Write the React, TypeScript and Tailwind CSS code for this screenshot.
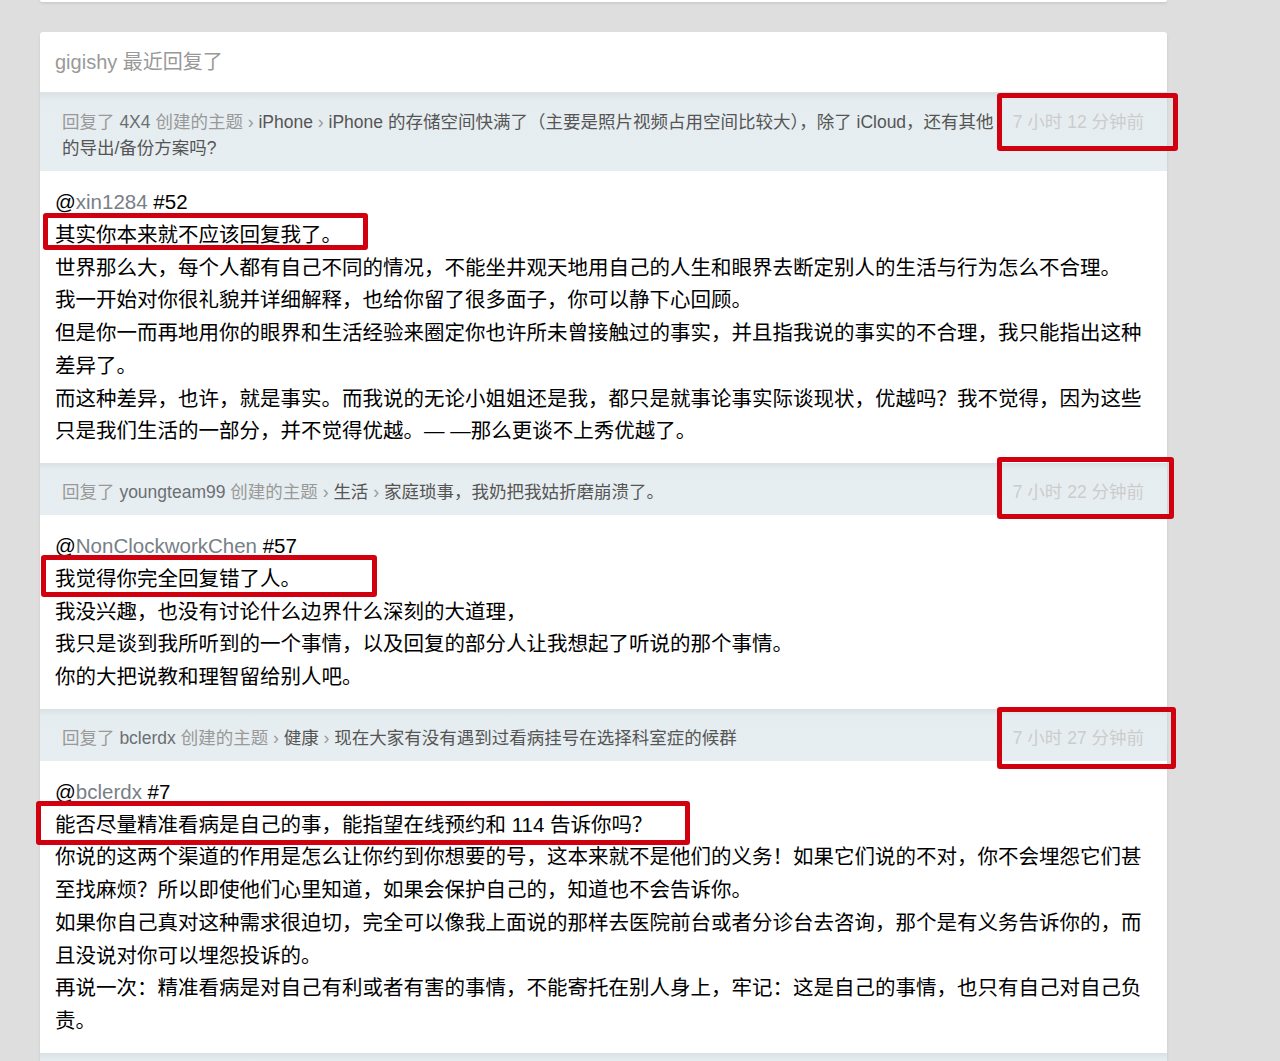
// 最近回复列表 — gigishy 的回复记录（带红框标注）

const FONT = "font-['Liberation_Sans','Noto_Sans_CJK_SC',sans-serif]"

interface Reply {
  author: string
  topicNode: string
  title: string[]
  time: string
  to: string
  floor: string
  lines: string[]
}

const REPLIES: Reply[] = [
  {
    author: '4X4',
    topicNode: 'iPhone',
    // 原图在"其他"后折行
    title: ['iPhone 的存储空间快满了（主要是照片视频占用空间比较大），除了 iCloud，还有其他', '的导出/备份方案吗?'],
    time: '7 小时 12 分钟前',
    to: 'xin1284',
    floor: '#52',
    lines: [
      '其实你本来就不应该回复我了。',
      '世界那么大，每个人都有自己不同的情况，不能坐井观天地用自己的人生和眼界去断定别人的生活与行为怎么不合理。',
      '我一开始对你很礼貌并详细解释，也给你留了很多面子，你可以静下心回顾。',
      '但是你一而再地用你的眼界和生活经验来圈定你也许所未曾接触过的事实，并且指我说的事实的不合理，我只能指出这种差异了。',
      '而这种差异，也许，就是事实。而我说的无论小姐姐还是我，都只是就事论事实际谈现状，优越吗？我不觉得，因为这些只是我们生活的一部分，并不觉得优越。— —那么更谈不上秀优越了。',
    ],
  },
  {
    author: 'youngteam99',
    topicNode: '生活',
    title: ['家庭琐事，我奶把我姑折磨崩溃了。'],
    time: '7 小时 22 分钟前',
    to: 'NonClockworkChen',
    floor: '#57',
    lines: [
      '我觉得你完全回复错了人。',
      '我没兴趣，也没有讨论什么边界什么深刻的大道理，',
      '我只是谈到我所听到的一个事情，以及回复的部分人让我想起了听说的那个事情。',
      '你的大把说教和理智留给别人吧。',
    ],
  },
  {
    author: 'bclerdx',
    topicNode: '健康',
    title: ['现在大家有没有遇到过看病挂号在选择科室症的候群'],
    time: '7 小时 27 分钟前',
    to: 'bclerdx',
    floor: '#7',
    lines: [
      '能否尽量精准看病是自己的事，能指望在线预约和 114 告诉你吗？',
      '你说的这两个渠道的作用是怎么让你约到你想要的号，这本来就不是他们的义务！如果它们说的不对，你不会埋怨它们甚至找麻烦？所以即使他们心里知道，如果会保护自己的，知道也不会告诉你。',
      '如果你自己真对这种需求很迫切，完全可以像我上面说的那样去医院前台或者分诊台去咨询，那个是有义务告诉你的，而且没说对你可以埋怨投诉的。',
      '再说一次：精准看病是对自己有利或者有害的事情，不能寄托在别人身上，牢记：这是自己的事情，也只有自己对自己负责。',
    ],
  },
]

const DOCK_BG = 'bg-[linear-gradient(to_bottom,#d9e1e4,#e6edf0_7px,#e7eef1)]'

// ── 灰色标题条（回复了 xx 创建的主题 › 节点 › 标题）────────────
function Dock({ r }: { r: Reply }) {
  return (
    <div className={`flex items-start ${DOCK_BG} text-[17.5px] leading-[26px]`}>
      <div className="flex-1 min-w-0 pl-[22px] pt-[16px] pb-[10px] text-[#999]">
        回复了 <span className="text-[#6b6f73]">{r.author}</span> 创建的主题 ›{' '}
        <span className="text-[#555]">{r.topicNode}</span> ›{' '}
        <span className="text-[#555]">
          {r.title.map((t, i) => (
            <span key={i}>
              {i > 0 && <br />}
              {t}
            </span>
          ))}
        </span>
      </div>
      <div className="w-[164px] shrink-0 pt-[16px] pb-[10px] pr-[23px] text-right text-[#cccccc] whitespace-nowrap">
        {r.time}
      </div>
    </div>
  )
}

// ── 回复正文 ────────────────────────────────────────────────────
function ReplyBody({ r }: { r: Reply }) {
  return (
    <div className="px-[15px] py-[15px] text-[20.5px] leading-[32.75px] text-black">
      <div>
        @<span className="text-[#778087]">{r.to}</span> {r.floor}
      </div>
      {r.lines.map((l, i) => (
        <div key={i}>{l}</div>
      ))}
    </div>
  )
}

// ── 红色标注框（叠在内容上）──────────────────────────────────────
const MARKS = [
  'left-[997px] top-[93px] w-[181px] h-[58px]',
  'left-[997px] top-[457px] w-[177px] h-[62px]',
  'left-[997px] top-[707px] w-[179px] h-[62px]',
  'left-[43px] top-[213px] w-[325px] h-[37px]',
  'left-[41px] top-[555px] w-[336px] h-[42px]',
  'left-[36px] top-[801px] w-[654px] h-[44px]',
]

export default function App() {
  return (
    <div className={`relative h-[1061px] overflow-hidden bg-[#dedede] ${FONT}`}>
      <div className="ml-[40px] w-[1127px]">
        {/* 上一张卡片的底边 */}
        <div className="h-[2px] bg-white rounded-b-[3px] shadow-[0_1px_3px_rgba(0,0,0,0.15)]" />

        <div className="mt-[30px] bg-white rounded-[3px] shadow-[0_2px_3px_rgba(0,0,0,0.1)]">
          <div className="h-[61px] px-[15px] flex items-center border-b border-[#e2e2e2] text-[20px] text-[#999]">
            gigishy 最近回复了
          </div>

          {REPLIES.map((r, i) => (
            <div key={i}>
              <Dock r={r} />
              <ReplyBody r={r} />
            </div>
          ))}

          {/* 下一条的标题条（被窗口截断）*/}
          <div className={`h-[52px] ${DOCK_BG}`} />
        </div>
      </div>

      {MARKS.map((m, i) => (
        <div key={i} className={`absolute ${m} border-[5px] border-[#d0000f] rounded-[3px]`} />
      ))}
    </div>
  )
}
